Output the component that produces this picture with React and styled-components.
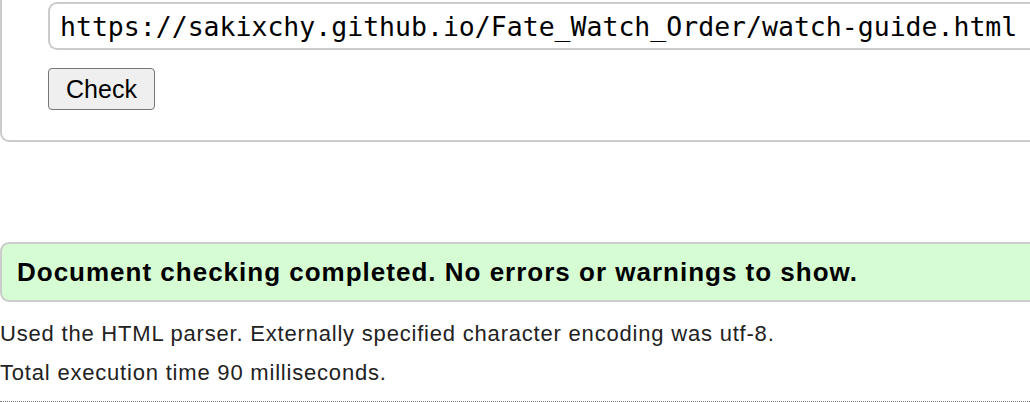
import styled, { createGlobalStyle } from 'styled-components';

const Global = createGlobalStyle`
  html, body { margin:0; padding:0; background:#fff; overflow:hidden; }
  body { font-family:"Liberation Sans", Arial, sans-serif; color:#222; }
`;

const Page = styled.div`
  width:1040px;
`;

/* ─── Formulaire ── */
const Form = styled.fieldset`
  margin:0; padding:2px 0 30px 46px;
  border:2px solid #ccc; border-top:none;
  border-radius:0 0 0 9px;
  display:flex; flex-direction:column; align-items:flex-start; gap:18px;
`;
const UrlInput = styled.input`
  box-sizing:border-box;
  width:1000px; height:48px;
  padding:0 10px;
  font-family:"DejaVu Sans Mono", "Liberation Mono", monospace;
  font-size:26.5px; color:#000;
  border:2px solid #ccc; border-right:none;
  border-radius:9px 0 0 9px;
  outline:none; background:#fff;
`;
const CheckBtn = styled.button`
  box-sizing:border-box;
  width:107px; height:42px;
  font-family:"Liberation Sans", Arial, sans-serif;
  font-size:25px; color:#000;
  background:#efefef;
  border:1.5px solid #767676; border-radius:4px;
  padding:0;
`;

/* ─── Résultat ── */
const Success = styled.div`
  margin-top:100px;
  box-sizing:border-box;
  height:60px;
  background:#d5fcd2;
  border:2px solid #ccc; border-right:none;
  border-radius:9px 0 0 9px;
  display:flex; align-items:center;
  padding-left:15px;
  font-size:26px; font-weight:700; color:#000;
  letter-spacing:1px;
`;
const Info = styled.p`
  margin:0; font-size:22px; line-height:39px; color:#222;
  letter-spacing:0.8px;
  &:first-of-type{ margin-top:12px; }
`;
const Rule = styled.hr`
  margin:9px 0 0; border:none; border-top:1px dotted #777;
`;

const App = () => (
  <Page>
    <Global />
    <Form>
      <UrlInput defaultValue="https://sakixchy.github.io/Fate_Watch_Order/watch-guide.html" />
      <CheckBtn>Check</CheckBtn>
    </Form>
    <Success>Document checking completed. No errors or warnings to show.</Success>
    <Info>Used the HTML parser. Externally specified character encoding was utf-8.</Info>
    <Info>Total execution time 90 milliseconds.</Info>
    <Rule />
  </Page>
);

export default App;
